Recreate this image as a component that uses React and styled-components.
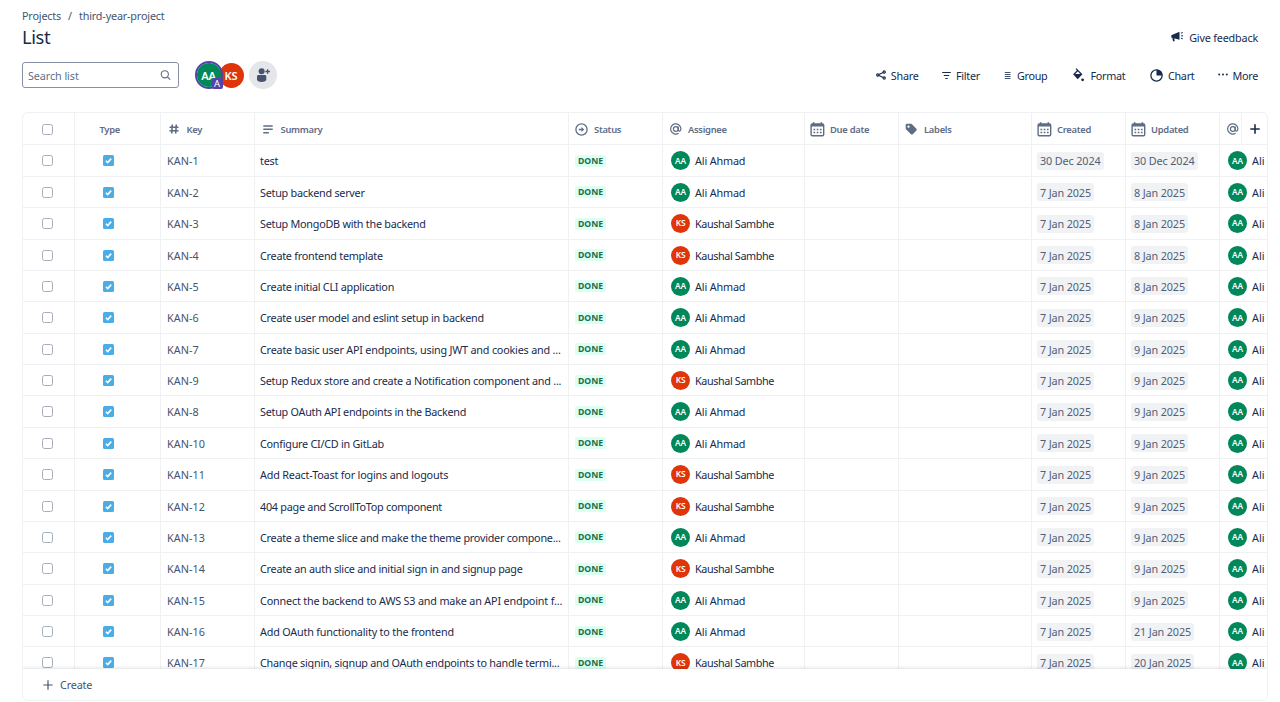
import React from 'react';
import styled, { createGlobalStyle, css } from 'styled-components';

const Global = createGlobalStyle`
  * { box-sizing: border-box; }
  html, body { margin: 0; background: #fff; }
  body {
    width: 1280px; height: 702px; overflow: hidden;
    font-family: "Noto Sans", "Open Sans", sans-serif;
    font-size: 10.8px; color: #172b4d;
  }
`;

const Page = styled.main`
  width: 1280px; height: 702px; padding: 8px 12px 0 22px;
  display: flex; flex-direction: column;
`;
const Breadcrumbs = styled.nav`
  display: flex; height: 15px; align-items: center; gap: 7px;
  color: #44546f; letter-spacing: -0.17px;
`;
const TitleRow = styled.header`
  display: flex; justify-content: space-between; align-items: center;
  height: 28px; padding-right: 10px;
`;
const Title = styled.h1`
  margin: 0; font-size: 18.4px; font-weight: 400; line-height: 27px; height: 28px; letter-spacing: -0.4px;
`;
const Action = styled.button`
  display: flex; align-items: center; gap: ${(p) => p.$gap || 4.5}px;
  margin: 0 0 0 ${(p) => p.$before || 0}px; padding: 0; border: 0; background: none;
  font: inherit; color: #172b4d; letter-spacing: ${(p) => p.$track || -0.28}px;
  white-space: nowrap;
`;
const Toolbar = styled.div`
  display: flex; align-items: center; height: 28px; margin-top: 10px; padding-right: 10px;
`;
const Search = styled.div`
  display: flex; align-items: center; justify-content: space-between;
  width: 157px; height: 26px; padding: 0 7px 0 5px;
  border: 1px solid #8590a2; border-radius: 3px; color: #626f86; letter-spacing: -0.08px;
`;
const People = styled.div`
  display: flex; align-items: center; margin-left: 15.5px;
`;
const Avatar = styled.span`
  display: flex; flex: none; align-items: center; justify-content: center;
  width: ${(p) => p.$size}px; height: ${(p) => p.$size}px; border-radius: 50%;
  background: ${(p) => (p.$who === 'AA' ? '#00875a' : '#de350b')};
  color: #fff; font-weight: 600; font-size: ${(p) => (p.$size > 20 ? 11 : 8.3)}px;
  letter-spacing: -0.2px; line-height: 1;
`;
const Selected = styled.div`
  position: relative; display: flex; border: 2px solid #5243aa; border-radius: 50%;
  z-index: 1;
`;
const Badge = styled.span`
  position: absolute; right: -2px; bottom: -2px; width: 11px; height: 11px;
  display: flex; align-items: center; justify-content: center;
  background: #5243aa; border-radius: 2px; color: #fff; font-size: 9.5px; line-height: 1;
`;
const Second = styled.div`
  margin-left: -4px;
`;
const AddPeople = styled.button`
  display: flex; align-items: center; justify-content: center;
  width: 28px; height: 28px; margin-left: 5px; padding: 0; border: 0; border-radius: 50%;
  background: #e4e6ea;
`;
const Actions = styled.div`
  display: flex; align-items: center; margin-left: auto;
`;

const TableBox = styled.section`
  width: 1246px; height: 589px; margin-top: 23px; overflow: hidden;
  display: flex; flex-direction: column;
  border: 1px solid #f0f1f3; border-radius: 6px;
`;
const Viewport = styled.div`
  height: 556px; flex: none; overflow: hidden;
`;
const columns = css`
  display: grid;
  grid-template-columns: 52px 86px 94px 314px 94px 142px 94px 133px 94px 94px 47px;
`;
const Cell = styled.div`
  display: flex; align-items: center; min-width: 0; overflow: hidden;
  padding-left: ${(p) => p.$pad || 0}px; gap: ${(p) => p.$gap || 0}px;
  border-right: 1px solid #f0f1f3; white-space: nowrap;
  color: ${(p) => (p.$muted ? '#44546f' : 'inherit')};
  letter-spacing: ${(p) => p.$track || 0}px;
  &:last-child { border-right: 0; }
`;
const HeadRow = styled.div`
  ${columns}
  height: 32.4px; border-bottom: 1px solid #f0f1f3;
  font-size: 9.4px; font-weight: 600; color: #5e6c84;
  ${Cell} { padding-top: 1px; letter-spacing: -0.28px; }
  ${Cell}:last-child { padding-top: 0; }
`;
const Row = styled.div`
  ${columns}
  height: 31.38px; border-bottom: 1px solid #f0f1f3;
  ${Cell} { padding-top: 0.6px; }
`;
const Check = styled.span`
  width: 11px; height: 11px; border: 1px solid #a5adba; border-radius: 2.5px; background: #fff;
`;
const Lozenge = styled.span`
  display: flex; align-items: center; height: 12px; padding: 0 3px;
  border-radius: 2px; background: #dcfff1; color: #216e4e;
  font-size: 8.7px; font-weight: 700; letter-spacing: -0.05px; line-height: 12px;
`;
const DateChip = styled.span`
  display: flex; align-items: center; height: 18px; padding: 0 3px; border-radius: 3px;
  background: #f1f2f4; color: #505f79; letter-spacing: -0.12px;
`;
const LastHead = styled.div`
  display: flex; align-items: center; justify-content: space-between; width: 100%; height: 100%;
`;
const AddColumn = styled.div`
  display: flex; align-items: center; justify-content: center;
  width: 26px; height: 100%; border-left: 1px solid #f0f1f3; color: #172b4d;
`;
const Footer = styled.footer`
  display: flex; align-items: center; gap: 7px; height: 31px; flex: none; padding-left: 20px;
  color: #44546f; letter-spacing: -0.15px; background: #fff; z-index: 1;
  box-shadow: 0 -1px 3px rgba(9, 30, 66, 0.14);
`;
const Svg = styled.svg`
  display: block; flex: none; fill: none; stroke: currentColor;
`;

const Icon = ({ w, h = w, box, sw = 1.5, children }) => (
  <Svg width={w} height={h} viewBox={box || `0 0 ${w} ${h}`} strokeWidth={sw}>{children}</Svg>
);
const solid = { fill: 'currentColor', stroke: 'none' };

const SearchIcon = () => (
  <Icon w={11} sw={1.1}><circle cx="4.8" cy="4.3" r="3.6" /><path d="M7.500 7 9.900 9.300" strokeLinecap="round" /></Icon>
);
const AddPersonIcon = () => (
  <Svg width="16" height="16" viewBox="0 0 16 16" color="#44546f">
    <circle cx="6.6" cy="4.2" r="3" {...solid} />
    <path d="M2 9.4C2 8.6 2.7 8 3.5 8h6.300c.8 0 1.500.6 1.500 1.400v2.800c0 1.800-2 2.700-4.700 2.700S2 14 2 12.200z" {...solid} />
    <path d="M12.600 2.200v4.600M10.300 4.500h4.600" strokeWidth="1.300" />
  </Svg>
);
const HornIcon = () => (
  <Icon w={13} h={12}>
    <path d="M.3 4.200 8.500.8v8L.3 6.600z" {...solid} />
    <path d="M1.300 6.500h2l.4 3.700H2z" {...solid} />
    <path d="M9.900 2.200l1.900-.6M10.100 4.800h2M9.900 7.200l1.900.6" strokeWidth="1" />
  </Icon>
);
const ShareIcon = () => (
  <Icon w={10} h={11} sw={1.2}>
    <circle cx="1.800" cy="5" r="1.100" /><circle cx="8.200" cy="2" r="1.100" /><circle cx="8.200" cy="8" r="1.100" />
    <path d="M2.900 4.500 7.200 2.500M2.900 5.500l4.300 2" />
  </Icon>
);
const FilterIcon = () => (
  <Icon w={9} h={9} sw={1}><path d="M.2 1.500h8.600M1.800 4.500h5.400M3.300 7.500h2.400" /></Icon>
);
const GroupIcon = () => (
  <Icon w={7} h={9} sw={1}><path d="M.8 1.500h5.700M.8 3.500h5.700M.8 5.500h5.700M.8 7.500h5.700" strokeOpacity=".8" /></Icon>
);
const FormatIcon = () => (
  <Icon w={11} h={14} sw={1.300}>
    <path d="M3 .6l5.500 5.700-3.800 4L1 6.300l3.700-3.800" />
    <path d="M.8 6h8L4.700 10.600z" {...solid} />
    <circle cx="9.600" cy="11.800" r="1.400" {...solid} />
  </Icon>
);
const ChartIcon = () => (
  <Icon w={13} sw={1.300}><circle cx="6.500" cy="6.500" r="5.600" /><path d="M6.500.5a6 6 0 0 1 6 6h-6z" {...solid} /></Icon>
);
const MoreIcon = () => (
  <Icon w={10} h={4}>
    <circle cx="1.200" cy="1.500" r="1" {...solid} /><circle cx="5" cy="1.500" r="1" {...solid} /><circle cx="8.800" cy="1.500" r="1" {...solid} />
  </Icon>
);
const HashIcon = () => (
  <Icon w={10} sw={1.600}><path d="M3.300.5 2.700 9.500M7.300.5 6.700 9.500M.5 3.200h9M.5 6.800h9" /></Icon>
);
const LinesIcon = () => (
  <Icon w={10} h={9} sw={1.400}><path d="M.3 1h9.400M.3 4.300h9.400M.3 7.700h5.600" /></Icon>
);
const StatusIcon = () => (
  <Icon w={13} sw={1.300}>
    <circle cx="6.500" cy="6.500" r="5.600" /><path d="M3.800 6.500h4" strokeWidth="1.600" />
    <path d="M6.500 3.900 9.200 6.500 6.500 9.100z" {...solid} />
  </Icon>
);
const AtIcon = () => (
  <Icon w={12} sw={1.200}>
    <circle cx="5.800" cy="6" r="2.400" />
    <path d="M8.200 3.600v3.200c0 2 2.700 1.800 2.700-1A5.100 5.100 0 1 0 8.600 10.200" />
  </Icon>
);
const CalendarIcon = () => (
  <Icon w={15} sw={1.400}>
    <rect x="1.100" y="2" width="12.600" height="11.800" rx="1.200" />
    <path d="M1 2h13v2.600H1z" {...solid} />
    <path d="M3.700.2v2M11.300.2v2" strokeWidth="1.600" />
    <path d="M3.500 7.600h8.200M3.500 10.600h8.200" strokeWidth="1.500" strokeDasharray="1.700 1.500" />
  </Icon>
);
const TagIcon = () => (
  <Icon w={12}>
    <path fillRule="evenodd" d="M.6 2.200C.6 1.300 1.300.7 2.200.7h3.500c.4 0 .8.1 1 .4l4.700 4.600c.5.600.5 1.300 0 1.900L7.800 11.200c-.5.5-1.300.5-1.800 0L1.200 6.500a1.500 1.500 0 0 1-.5-1zM3.500 2.400a1.200 1.200 0 1 0 0 2.400 1.200 1.200 0 0 0 0-2.400z" {...solid} />
  </Icon>
);
const PlusIcon = ({ sw }) => (
  <Icon w={10} sw={sw}><path d="M5 .3v9.400M.3 5h9.400" /></Icon>
);
const TaskIcon = () => (
  <Svg width="11" height="11" viewBox="0 0 11 11">
    <rect width="11" height="11" rx="1.500" fill="#4bade8" stroke="none" />
    <path d="M2.900 5.700 4.700 7.500 8.200 3.600" stroke="#fff" strokeWidth="1.600" />
  </Svg>
);

const PEOPLE = {
  AA: { name: 'Ali Ahmad', track: -0.15 },
  KS: { name: 'Kaushal Sambhe', track: -0.38 },
};
const ROWS = [
  [1, 'test', 'AA', '30 Dec 2024', '30 Dec 2024'],
  [2, 'Setup backend server', 'AA', '7 Jan 2025', '8 Jan 2025'],
  [3, 'Setup MongoDB with the backend', 'KS', '7 Jan 2025', '8 Jan 2025'],
  [4, 'Create frontend template', 'KS', '7 Jan 2025', '8 Jan 2025'],
  [5, 'Create initial CLI application', 'AA', '7 Jan 2025', '8 Jan 2025'],
  [6, 'Create user model and eslint setup in backend', 'AA', '7 Jan 2025', '9 Jan 2025'],
  [7, 'Create basic user API endpoints, using JWT and cookies and ...', 'AA', '7 Jan 2025', '9 Jan 2025'],
  [9, 'Setup Redux store and create a Notification component and ...', 'KS', '7 Jan 2025', '9 Jan 2025'],
  [8, 'Setup OAuth API endpoints in the Backend', 'AA', '7 Jan 2025', '9 Jan 2025'],
  [10, 'Configure CI/CD in GitLab', 'AA', '7 Jan 2025', '9 Jan 2025'],
  [11, 'Add React-Toast for logins and logouts', 'KS', '7 Jan 2025', '9 Jan 2025'],
  [12, '404 page and ScrollToTop component', 'KS', '7 Jan 2025', '9 Jan 2025'],
  [13, 'Create a theme slice and make the theme provider compone...', 'AA', '7 Jan 2025', '9 Jan 2025'],
  [14, 'Create an auth slice and initial sign in and signup page', 'KS', '7 Jan 2025', '9 Jan 2025'],
  [15, 'Connect the backend to AWS S3 and make an API endpoint f...', 'AA', '7 Jan 2025', '9 Jan 2025'],
  [16, 'Add OAuth functionality to the frontend', 'AA', '7 Jan 2025', '21 Jan 2025'],
  [17, 'Change signin, signup and OAuth endpoints to handle termi...', 'KS', '7 Jan 2025', '20 Jan 2025'],
];
// Letter spacing for the summaries that run wider or narrower than the rest.
const SUMMARY_TRACK = { 7: -0.2, 9: -0.22, 11: -0.18, 15: -0.18, 16: -0.19, 17: -0.24 };

export default function App() {
  return (
    <>
      <Global />
      <Page>
        <Breadcrumbs><span>Projects</span><span>/</span><span>third-year-project</span></Breadcrumbs>
        <TitleRow>
          <Title>List</Title>
          <Action $gap={5.5} $track={-0.18}><HornIcon />Give feedback</Action>
        </TitleRow>
        <Toolbar>
          <Search><span>Search list</span><SearchIcon /></Search>
          <People>
            <Selected><Avatar $who="AA" $size={24}>AA</Avatar><Badge>A</Badge></Selected>
            <Second><Avatar $who="KS" $size={25}>KS</Avatar></Second>
            <AddPeople><AddPersonIcon /></AddPeople>
          </People>
          <Actions>
            <Action><ShareIcon />Share</Action>
            <Action $before={24}><FilterIcon />Filter</Action>
            <Action $before={24} $gap={6}><GroupIcon />Group</Action>
            <Action $before={26} $gap={6}><FormatIcon />Format</Action>
            <Action $before={25}><ChartIcon />Chart</Action>
            <Action $before={23.5}><MoreIcon />More</Action>
          </Actions>
        </Toolbar>
        <TableBox>
          <Viewport>
            <HeadRow>
              <Cell $pad={19}><Check /></Cell>
              <Cell $pad={24.5}>Type</Cell>
              <Cell $pad={7.5} $gap={8}><HashIcon />Key</Cell>
              <Cell $pad={7.5} $gap={8}><LinesIcon />Summary</Cell>
              <Cell $pad={6} $gap={6}><StatusIcon />Status</Cell>
              <Cell $pad={7} $gap={6}><AtIcon />Assignee</Cell>
              <Cell $pad={5} $gap={5}><CalendarIcon />Due date</Cell>
              <Cell $pad={6} $gap={7}><TagIcon />Labels</Cell>
              <Cell $pad={5} $gap={5}><CalendarIcon />Created</Cell>
              <Cell $pad={5} $gap={5}><CalendarIcon />Updated</Cell>
              <Cell $pad={7}>
                <LastHead><AtIcon /><AddColumn><PlusIcon sw={1.600} /></AddColumn></LastHead>
              </Cell>
            </HeadRow>
            {ROWS.map(([n, summary, who, created, updated]) => (
              <Row key={n}>
                <Cell $pad={19}><Check /></Cell>
                <Cell $pad={28}><TaskIcon /></Cell>
                <Cell $pad={6} $muted $track={0.05}>KAN-{n}</Cell>
                <Cell $pad={5} $track={SUMMARY_TRACK[n] || -0.25}>{summary}</Cell>
                <Cell $pad={6}><Lozenge>DONE</Lozenge></Cell>
                <Cell $pad={8} $gap={5} $track={PEOPLE[who].track}>
                  <Avatar $who={who} $size={19}>{who}</Avatar>{PEOPLE[who].name}
                </Cell>
                <Cell />
                <Cell />
                <Cell $pad={5}><DateChip>{created}</DateChip></Cell>
                <Cell $pad={5}><DateChip>{updated}</DateChip></Cell>
                <Cell $pad={8} $gap={5}><Avatar $who="AA" $size={19}>AA</Avatar>Ali</Cell>
              </Row>
            ))}
          </Viewport>
          <Footer><PlusIcon sw={1.200} />Create</Footer>
        </TableBox>
      </Page>
    </>
  );
}
